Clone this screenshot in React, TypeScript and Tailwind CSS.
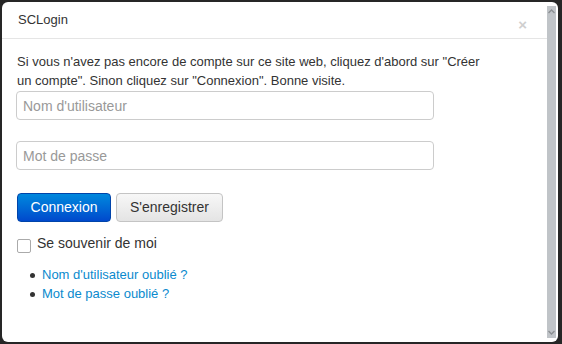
export default function App() {
  const links = ["Nom d'utilisateur oublié ?", "Mot de passe oublié ?"];
  return (
    <div
      className="w-[562px] h-[344px] bg-[#262626] p-[2px] overflow-hidden"
      style={{ fontFamily: '"Liberation Sans", Arial, sans-serif' }}
    >
      <div className="h-[340px] w-[556px] bg-white rounded-[6px] flex overflow-hidden">
        <div className="flex-1 flex flex-col">
          <div className="h-[37px] border-b border-[#e5e5e5] flex items-center justify-between pl-[16px] pr-[20px]">
            <span className="text-[13px] text-[#333] pb-[1px]">SCLogin</span>
            <span className="text-[15px] font-bold text-[#cfcfcf] leading-none mt-[8px]">×</span>
          </div>
          <div className="px-[14px] pt-[13px] text-[#333]">
            <p className="text-[13px] leading-[19px] m-0 w-[478px] pl-[1px]">
              Si vous n'avez pas encore de compte sur ce site web, cliquez d'abord sur "Créer un compte". Sinon cliquez
              sur "Connexion". Bonne visite.
            </p>
            <input
              type="text"
              placeholder="Nom d'utilisateur"
              className="block mt-[1px] w-[418px] h-[29px] border border-[#ccc] rounded-[4px] px-[6px] text-[14px] placeholder:text-[#999] outline-none"
            />
            <input
              type="password"
              placeholder="Mot de passe"
              className="block mt-[21px] w-[418px] h-[29px] border border-[#ccc] rounded-[4px] px-[6px] text-[14px] placeholder:text-[#999] outline-none"
            />
            <div className="flex gap-[5px] mt-[23px] pl-[1px]">
              <button className="h-[29px] w-[94px] rounded-[4px] border border-[#0044aa] bg-gradient-to-b from-[#0088dd] to-[#0048cc] text-white text-[14px]">
                Connexion
              </button>
              <button className="h-[29px] w-[107px] rounded-[4px] border border-[#c4c4c4] bg-gradient-to-b from-[#f7f7f7] to-[#e4e4e4] text-[#333] text-[14px]">
                S'enregistrer
              </button>
            </div>
            <label className="flex items-center mt-[11px] pl-[1px]">
              <span className="w-[14px] h-[14px] border border-[#aaa] rounded-[2px] bg-white mt-[4px]" />
              <span className="text-[14px] ml-[6px] text-[#333]">Se souvenir de moi</span>
            </label>
            <ul className="mt-[11px] pl-[14px] text-[13px] leading-[19px]">
              {links.map((l) => (
                <li key={l} className="flex items-center">
                  <span className="w-[5px] h-[5px] rounded-full bg-[#333] mr-[7px] mt-[1px]" />
                  <a className="text-[#0a8ace]">{l}</a>
                </li>
              ))}
            </ul>
          </div>
        </div>
        <div className="w-[9px] mr-[2px] my-[4px] bg-[#c0c4c8] flex flex-col items-center justify-between py-[3px] text-[#8a8e92]">
          <svg width="7" height="5" viewBox="0 0 7 5">
            <path d="M0.5 4 L3.5 1 L6.5 4" stroke="currentColor" strokeWidth="1.3" fill="none" />
          </svg>
          <svg width="7" height="5" viewBox="0 0 7 5">
            <path d="M0.5 1 L3.5 4 L6.5 1" stroke="currentColor" strokeWidth="1.3" fill="none" />
          </svg>
        </div>
      </div>
    </div>
  );
}
